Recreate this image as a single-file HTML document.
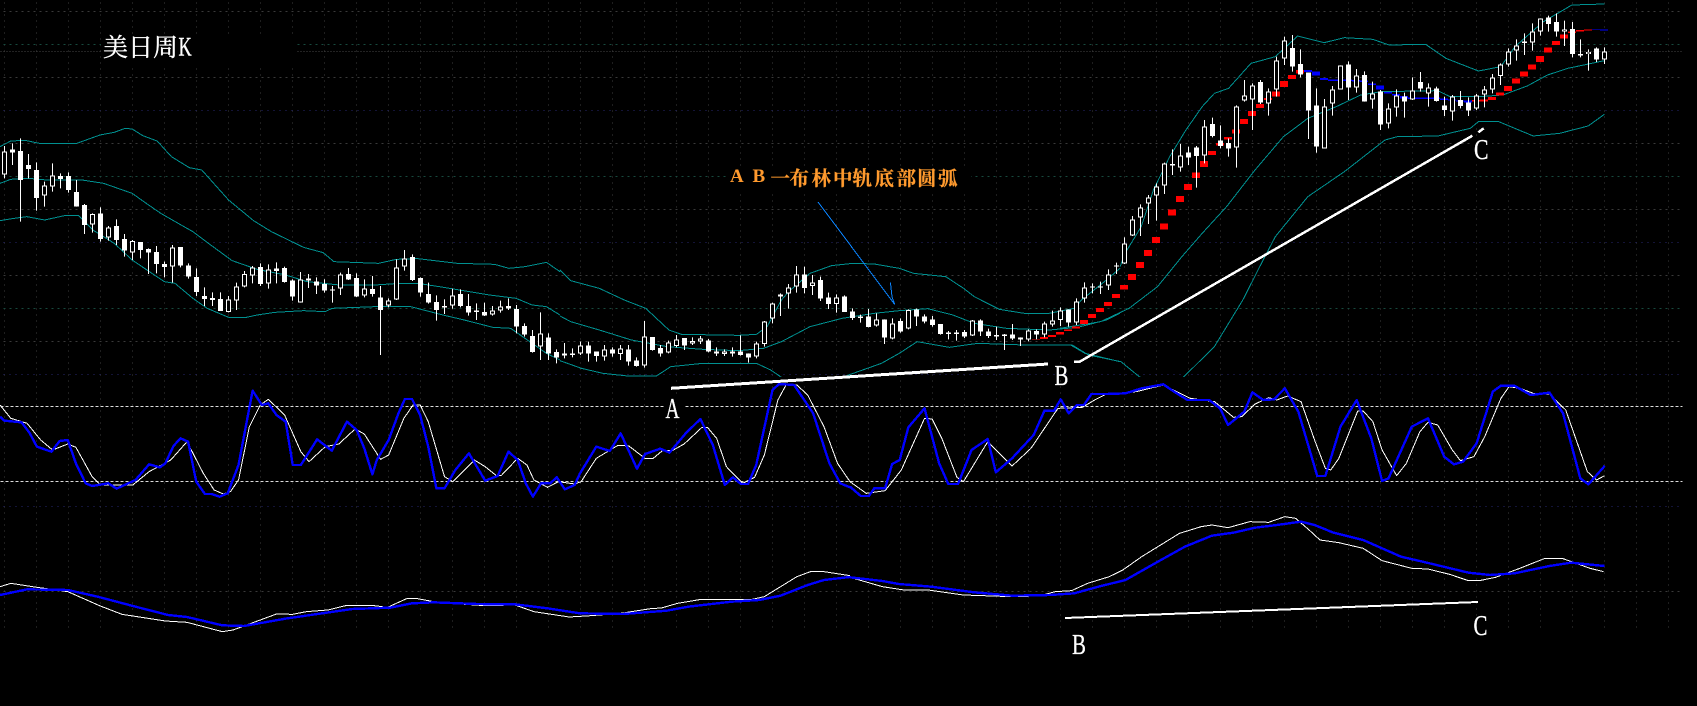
<!DOCTYPE html>
<html lang="zh">
<head>
<meta charset="utf-8">
<title>美日周K</title>
<style>
html,body{margin:0;padding:0;background:#000;width:1697px;height:706px;overflow:hidden}
svg{display:block}
polyline{fill:none;vector-effect:non-scaling-stroke;stroke-linejoin:round}
.band polyline{stroke:#009090;stroke-width:1}
.w polyline{stroke:#fff;stroke-width:1}
.b polyline{stroke:#0000ff;stroke-width:2.4}
.t{font-family:"Liberation Serif","Noto Serif CJK SC",serif}
</style>
</head>
<body>
<svg width="1697" height="706" viewBox="0 0 1697 706" xmlns="http://www.w3.org/2000/svg" shape-rendering="crispEdges">
<defs><clipPath id="c1"><rect x="0" y="0" width="1697" height="377"/></clipPath></defs>
<rect width="1697" height="706" fill="#000"/>

<!-- grid -->
<g transform="translate(.5 .5)" fill="none" stroke-width="1">
<path stroke="#3c3c3c" stroke-dasharray="1 5" d="M4 2V632M36 2V632M68 2V632M100 2V632M132 2V632M164 2V632M196 2V632M228 2V632M260 2V632M292 2V632M324 2V632M356 2V632M388 2V632M420 2V632M452 2V632M484 2V632M516 2V632M548 2V632M580 2V632M612 2V632M644 2V632M676 2V632M708 2V632M740 2V632M772 2V632M804 2V632M836 2V632M868 2V632M900 2V632M932 2V632M964 2V632M996 2V632M1028 2V632M1060 2V632M1092 2V632M1124 2V632M1156 2V632M1188 2V632M1220 2V632M1252 2V632M1284 2V632M1316 2V632M1348 2V632M1380 2V632M1412 2V632M1444 2V632M1476 2V632M1508 2V632M1540 2V632M1572 2V632M1604 2V632M1636 2V632M1668 2V632"/>
<path stroke="#3a3a3a" stroke-dasharray="2 4" d="M3 11H1682M3 77H1682M3 143H1682M3 209H1682M3 275H1682M3 341H1682M3 591H1682"/>
<path stroke="#454545" stroke-dasharray="1 2" d="M0 51H1682"/>
<path stroke="#174a3e" stroke-dasharray="2 4" d="M3 44H1682M3 176H1682M3 308H1682"/>
<path stroke="#26266e" stroke-dasharray="1 5" d="M3 110H1682M3 242H1682M3 374H1682M3 506H1682"/>
<path stroke="#dcdcdc" stroke-dasharray="3 2" d="M0 406H1682M0 481H1682"/>
</g>
<!-- text masks -->
<rect x="101" y="35" width="196" height="33" fill="#000"/>
<rect x="727" y="167" width="244" height="25" fill="#000"/>
<rect x="664" y="396" width="20" height="24" fill="#000"/>
<rect x="1472" y="139" width="20" height="22" fill="#000"/>

<!-- bollinger -->
<g class="band" clip-path="url(#c1)">
<g transform="scale(.35714 .33333)">
<polyline points="0,440 30,423 70,421 110,430 215,430 280,405 320,397 350,385 370,387 400,407 440,423 480,470 530,503 565,510 640,600 710,662 760,695 850,742 905,758 935,785 1060,790 1110,778 1170,776 1280,790 1385,793 1425,805 1470,800 1530,787 1568,815"/>
<polyline points="0,550 30,538 80,535 130,540 230,540 290,550 370,580 400,603 450,640 540,695 590,735 650,782 720,808 800,825 860,845 950,855 1050,855 1120,850 1170,850 1230,860 1370,885 1445,895 1490,915 1530,920 1568,945"/>
<polyline points="0,662 40,655 75,650 125,660 180,647 220,647 260,690 320,730 370,780 460,845 490,850 540,895 580,925 640,952 690,952 720,945 770,937 850,932 910,935 930,925 1050,920 1150,920 1240,945 1300,960 1380,982 1430,985 1530,1060 1568,1080"/>
</g>
<g transform="translate(560 100) scale(.35714 .33333)">
<polyline points="0,510 30,542 110,565 180,600 240,625 305,690 340,703 500,706 550,703 580,680 620,600 640,575 700,520 760,497 820,490 880,492 950,505 990,520 1080,530 1130,565 1160,590 1230,628 1300,640 1370,640 1440,625 1460,600 1530,540 1568,505"/>
<polyline points="0,648 30,665 110,690 200,720 300,740 400,748 500,752 570,745 620,725 700,680 790,655 880,640 950,632 1030,626 1100,645 1160,670 1250,685 1370,690 1450,682 1530,660 1568,640"/>
<polyline points="0,782 60,805 120,820 190,828 270,828 310,800 400,790 550,790 590,810 620,832 700,880 770,880 800,828 900,790 950,760 1000,725 1090,742 1170,730 1300,735 1430,735 1470,760 1568,785"/>
</g>
<g transform="translate(1060 0) scale(.40625 .33333)">
<polyline points="148,800 160,760 200,680 230,570 270,470 310,390 350,320 380,280 415,265 470,190 530,170 585,108 650,128 700,113 770,118 810,135 900,133 950,175 1030,213 1085,200 1120,140 1190,65 1260,15 1340,12"/>
<polyline points="0,985 100,965 170,925 240,860 300,770 350,700 410,620 480,510 550,410 610,355 680,320 740,285 790,275 930,272 960,290 1030,290 1090,285 1150,258 1200,225 1250,205 1340,182"/>
<polyline points="0,1035 30,1035 70,1065 150,1085 195,1130 250,1170 305,1130 380,1040 450,900 500,780 530,710 610,590 700,515 800,420 830,410 930,408 1010,385 1030,365 1080,365 1165,408 1230,400 1300,378 1340,343"/>
</g>
</g>

<!-- SAR -->
<g transform="scale(1 .33333)" fill="none" stroke-width="8">
<path stroke="#f00" d="M1036 1017V1019M1044 1011V1017M1052 1005V1011M1060 996V1004M1068 989V993M1076 979V985M1084 960V972M1092 942V954M1100 924V936M1108 906V918M1116 882V894M1124 855V869M1132 822V840M1140 786V804M1148 750V768M1156 711V729M1164 671V689M1172 628V646M1180 588V606M1188 552V570M1196 518V534M1204 483V501M1212 453V465M1220 429V437M1228 411V419M1236 389V401M1244 357V372M1252 333V348M1260 312V324M1268 294V300M1276 275V289M1284 243V261M1292 225V237M1300 210V220M1476 300V304M1484 299V305M1492 291V300M1500 277V286M1508 258V273M1516 236V251M1524 215V230M1532 194V209M1540 168V186M1548 143V158M1556 123V135M1564 104V116M1572 95V99M1580 90V94M1588 88V92"/>
<path stroke="#00f" d="M1308 210V216M1316 215V227M1324 234V240M1332 239V243M1340 239V243M1348 239V243M1356 240V244M1364 242V246M1372 250V255M1380 257V269M1388 276V280M1396 282V287M1404 288V296M1412 293V297M1420 293V297M1428 293V297M1436 293V297M1444 296V300M1452 298V302M1460 302V304M1468 302V308M1596 88V90M1604 89V91"/>
</g>

<!-- candles -->
<g transform="translate(.5 0) scale(1 .33333)" fill="none">
<path stroke="#fff" stroke-width="1" d="M4 438V535M12 430V495M20 415V665M28 462V535M36 487V632M44 545V620M52 490V575M60 520V565M68 517V578M76 540V620M84 612V702M92 640V698M100 622V725M108 678V722M116 658V735M124 702V770M132 720V780M140 726V775M148 745V822M156 738V820M164 785V832M172 735V848M180 741V802M188 790V836M196 805V888M204 862V918M212 877V918M220 877V933M228 888V937M236 848V930M244 813V862M252 798V850M260 790V858M268 793V866M276 787V850M284 800V848M292 838V902M300 816V908M308 822V864M316 832V882M324 838V878M332 858V908M340 818V885M348 804V840M356 820V891M364 838V892M372 828V890M380 858V1065M388 895V922M396 778V900M404 750V812M412 763V843M420 832V890M428 848V911M436 886V962M444 898V942M452 866V926M460 868V922M468 882V947M476 910V960M484 908V948M492 918V947M500 902V938M508 895V930M516 915V1000M524 970V1010M532 990V1058M540 937V1080M548 1000V1080M556 1048V1090"/>
<path stroke="#fff" stroke-width="5" d="M4 455V523M12 448V458M20 453V540M28 495V507M36 510V594M44 556V587M52 526V559M60 528V537M68 528V570M76 576V620M84 615V675M92 642V674M100 640V717M108 682V712M116 678V720M124 717V752M132 723V757M140 726V750M148 747V758M156 756V792M164 792V801M172 742V800M180 741V797M188 796V830M196 831V876M204 888V897M212 894V900M220 897V933M228 898V936M236 859V902M244 822V860M252 802V826M260 801V852M268 808V850M276 805V813M284 804V846M292 842V890M300 838V908M308 835V842M316 844V857M324 852V872M332 868V872M340 824V865M348 822V839M356 834V890M364 865V887M372 867V882M380 892V930M388 901V917M396 802V898M404 775V800M412 771V840M420 834V878M428 882V908M436 906V930M444 918V923M452 886V916M460 882V918M468 918V938M476 932V936M484 936V947M492 931V944M500 919V932M508 918V926M516 927V980M524 978V1004M532 1008V1056M540 1000V1040M548 1012V1060M556 1056V1073"/>
<path stroke="#000" stroke-width="3" d="M4 458V520M44 559V584M52 529V556M92 645V671M108 685V709M132 726V754M172 745V797M228 901V933M236 862V899M244 825V857M252 805V823M268 811V847M300 841V905M340 827V862M364 868V884M388 904V914M396 805V895M404 778V797M452 889V913M492 934V941M500 922V929M540 1003V1037"/>
</g>
<g transform="translate(.5 100) scale(1 .33333)" fill="none">
<path stroke="#fff" stroke-width="1" d="M564 729V775M572 745V772M580 725V765M588 725V785M596 755V785M604 735V782M612 742V770M620 735V780M628 735V797M636 772V800M644 663V803M652 711V752M660 735V770M668 722V760M676 705V742M684 714V750M692 712V735M700 708V732M708 717V757M716 742V768M724 748V768M732 742V770M740 706V767M748 760V788M756 725V775M764 663V740M772 608V670M780 580V648M788 552V626M796 498V578M804 500V580M812 525V585M820 530V603M828 578V627M836 583V638M844 586V636M852 625V660M860 644V668M868 627V682M876 640V680M884 658V732M892 655V718M900 655V698M908 628V688M916 626V678M924 643V670M932 648V680M940 672V704M948 693V718M956 690V722M964 690V714M972 660V708M980 658V708M988 686V714M996 680V720M1004 702V750M1012 672V720M1020 712V738M1028 688V724M1036 688V718M1044 665V712M1052 632V680"/>
<path stroke="#fff" stroke-width="5" d="M564 760V767M572 760V765M580 736V760M588 736V760M596 755V768M604 748V770M612 748V760M620 745V762M628 748V785M636 781V798M644 709V797M652 711V750M660 744V760M668 727V758M676 718V738M684 714V737M692 723V730M700 715V725M708 721V755M716 754V760M724 755V762M732 755V760M740 754V765M748 760V772M756 730V770M764 664V732M772 610V655M780 583V590M788 562V580M796 523V560M804 523V564M812 548V558M820 540V595M828 592V612M836 593V612M844 589V636M852 634V654M860 650V654M868 650V681M876 659V677M884 658V713M892 671V716M900 663V695M908 630V686M916 628V650M924 649V664M932 658V675M940 672V702M948 698V702M956 698V702M964 696V710M972 662V706M980 661V695M988 694V708M996 705V710M1004 704V708M1012 703V715M1020 712V718M1028 692V718M1036 693V704M1044 670V704M1052 662V673"/>
<path stroke="#000" stroke-width="3" d="M580 739V757M604 751V767M620 748V759M644 712V794M668 730V755M676 721V735M692 726V727M700 718V722M724 758V759M756 733V767M764 667V729M772 613V652M780 586V587M788 565V577M796 526V557M812 551V555M836 596V609M876 662V674M892 674V713M908 633V683M972 665V703M1028 695V715M1044 673V701M1052 665V670"/>
</g>
<g transform="translate(.5 0) scale(1 .33333)" fill="none">
<path stroke="#fff" stroke-width="1" d="M1060 922V978M1068 928V980M1076 895V975M1084 847V908M1092 850V880M1100 845V882M1108 808V870M1116 788V822M1124 712V792M1132 648V708M1140 613V708M1148 585V672M1156 550V662M1164 488V582M1172 448V525M1180 432V515M1188 440V495M1196 438V563M1204 360V490M1212 353V412M1220 376V445M1228 415V470M1236 316V503M1244 240V305M1252 250V390M1260 240V312M1268 265V347M1276 170V290M1284 110V195M1292 105V215M1300 148V232M1308 218V417M1316 265V458M1324 297V445M1332 258V347M1340 196V268M1348 184V300M1356 207V278M1364 214V305M1372 245V326M1380 270V390M1388 310V385M1396 268V350M1404 278V353M1412 232V300M1420 216V275M1428 250V320M1436 260V305M1444 290V348M1452 285V362M1460 273V325M1468 292V348M1476 282V330M1484 258V322M1492 222V280M1500 190V255M1508 145V200M1516 118V182M1524 100V165M1532 70V152M1540 55V107M1548 47V95M1556 40V110M1564 62V138M1572 66V172M1580 118V172M1588 148V212M1596 142V186M1604 142V192"/>
<path stroke="#fff" stroke-width="5" d="M1060 931V960M1068 928V968M1076 905V968M1084 862V896M1092 860V863M1100 860V863M1108 824V857M1116 796V800M1124 730V790M1132 658V706M1140 622V653M1148 592V610M1156 559V587M1164 490V556M1172 492V496M1180 466V502M1188 458V472M1196 442V468M1204 380V466M1212 372V408M1220 421V438M1228 429V445M1236 319V442M1244 287V301M1252 256V298M1260 246V308M1268 275V310M1276 181V268M1284 121V175M1292 144V200M1300 192V224M1308 218V332M1316 316V440M1324 320V445M1332 268V310M1340 196V268M1348 193V263M1356 226V262M1364 225V305M1372 280V298M1380 274V374M1388 325V370M1396 286V322M1404 289V305M1412 272V298M1420 246V266M1428 262V280M1436 265V303M1444 316V330M1452 290V334M1460 300V318M1468 308V332M1476 286V326M1484 268V284M1492 232V268M1500 194V228M1508 154V194M1516 136V152M1524 124V129M1532 94V128M1540 55V94M1548 52V72M1556 66V95M1564 88V94M1572 87V162M1580 162V167M1588 156V162M1596 145V178M1604 154V178"/>
<path stroke="#000" stroke-width="3" d="M1060 934V957M1076 908V965M1084 865V893M1108 827V854M1124 733V787M1132 661V703M1140 625V650M1148 595V607M1156 562V584M1164 493V553M1180 469V499M1204 383V463M1236 322V439M1244 290V298M1252 259V295M1268 278V307M1276 184V265M1284 124V172M1324 323V442M1332 271V307M1340 199V265M1356 229V259M1372 283V295M1388 328V367M1396 289V319M1412 275V295M1428 265V277M1452 293V331M1476 289V323M1484 271V281M1492 235V265M1500 197V225M1508 157V191M1516 139V149M1532 97V125M1540 58V91M1564 90V92M1588 158V160M1604 157V175"/>
</g>

<!-- annotation lines -->
<g fill="none">
<path stroke="#0a84ff" stroke-width="1" d="M818 202L894.6 304.3L892 296.7L890.4 282.3"/>
<path stroke="#fff" stroke-width="3" d="M671 388.3L1048 364"/>
<path stroke="#fff" stroke-width="2.5" d="M1074 361.5H1080L1472.4 135.7M1478.4 132.3L1483.7 128.3"/>
<path stroke="#fff" stroke-width="2" d="M1065 618L1477.8 602"/>
</g>

<!-- stochastic & macd (white) -->
<g class="w">
<g transform="translate(0 370) scale(.54209 .33333)">
<polyline points="0,105 20,145 50,160 75,210 97,240 125,222 140,232 170,320 185,345 245,345 275,305 315,270 345,215 375,310 395,360 412,372 425,365 440,330 460,170 480,105 495,88 525,135 555,245 570,275 600,230 625,222 655,177 672,192 695,250 702,268 717,255 745,145 762,105 775,105 790,155 820,320 835,335 875,270 895,290 915,316 925,316 955,265 972,285 985,330 1010,352 1030,335 1060,342 1072,335 1100,265 1140,226 1160,228 1190,265 1205,265 1222,242 1240,242 1262,222 1295,172 1305,172 1322,205 1340,290 1370,340 1392,322 1410,255 1435,90 1450,45 1470,45 1490,75 1520,170 1545,280 1568,335"/>
<polyline points="0,650 20,640 60,650 125,665 160,690 185,708 225,733 305,753 345,757 410,785 430,780 455,765 510,732 540,733 565,725 605,720 640,706 690,707 715,712 750,686 770,686 800,695 830,700 895,707 950,705 985,725 1050,741 1090,737 1145,730 1200,716 1220,714 1250,700 1290,689 1385,689 1410,680 1470,620 1495,605 1520,605 1568,617"/>
</g>
<g transform="translate(850 370) scale(.54018 .33333)">
<polyline points="0,335 30,370 65,362 95,300 138,145 152,147 170,205 198,322 210,335 255,215 300,288 335,235 385,115 430,112 455,88 475,72 530,65 580,45 630,85 675,95 710,142 725,140 750,102 775,83 790,90 810,78 835,95 860,210 880,295 890,300 905,265 940,123 950,123 968,155 985,240 1012,317 1030,280 1055,185 1070,157 1088,165 1115,240 1130,272 1155,260 1175,200 1205,85 1220,50 1240,55 1265,70 1295,72 1325,120 1365,305 1382,330 1397,317"/>
<polyline points="0,622 60,650 100,660 145,660 210,675 300,680 350,678 380,665 410,662 440,640 480,620 505,600 540,560 570,530 610,490 650,470 670,465 700,473 740,455 775,457 805,440 825,445 850,480 870,510 905,518 950,535 985,572 1040,595 1070,597 1110,613 1145,632 1165,632 1195,622 1240,595 1285,566 1320,566 1370,595 1395,605"/>
</g>
</g>
<!-- stochastic & macd (blue) -->
<g class="b">
<g transform="translate(0 370) scale(.54209 .33333)">
<polyline points="0,140 8,152 40,157 55,190 68,230 95,245 110,213 125,210 140,280 158,340 170,348 200,340 215,356 250,330 275,283 295,292 305,280 320,228 333,205 347,215 362,335 378,372 390,372 405,380 420,370 440,285 466,62 483,105 495,100 510,135 527,155 540,285 555,285 585,208 612,242 640,155 658,180 672,235 687,313 695,270 717,210 735,130 747,87 760,87 775,135 790,230 805,355 820,355 840,300 865,250 895,332 918,318 938,245 955,270 970,340 983,380 998,340 1015,340 1027,322 1042,358 1060,345 1070,310 1100,230 1125,243 1145,190 1175,296 1190,252 1218,236 1235,248 1265,190 1292,147 1315,225 1337,345 1352,322 1367,342 1380,342 1395,285 1425,60 1437,42 1465,45 1500,130 1530,280 1550,340 1568,352"/>
<polyline points="0,675 50,658 125,660 180,680 250,710 310,735 345,741 410,766 450,768 530,745 650,717 720,713 760,700 800,697 880,702 950,703 1010,715 1070,730 1150,732 1230,722 1270,710 1350,695 1400,690 1440,677 1490,645 1520,630 1568,621"/>
</g>
<g transform="translate(850 370) scale(.54018 .33333)">
<polyline points="0,350 20,378 35,378 45,355 65,355 78,282 92,270 108,172 138,115 165,280 182,342 200,342 225,240 255,207 270,307 300,265 340,195 360,122 378,122 390,88 405,130 420,105 433,105 447,72 475,72 510,70 540,55 580,43 600,65 625,90 665,90 685,115 700,165 730,125 745,67 765,90 785,88 805,55 830,125 865,318 880,318 908,170 938,90 965,205 985,333 997,325 1040,170 1070,145 1100,260 1118,283 1135,275 1160,220 1190,65 1205,47 1230,47 1260,75 1295,68 1320,130 1352,325 1367,343 1397,288"/>
<polyline points="0,622 60,633 90,642 150,650 230,667 300,677 370,675 415,670 460,650 510,630 570,575 620,530 670,497 710,488 750,473 790,465 835,455 860,465 895,488 950,510 1020,560 1060,575 1145,608 1185,615 1230,610 1295,588 1335,578 1397,588"/>
</g>
</g>

<!-- text -->
<g shape-rendering="auto">
<text x="103 128 153" y="56" font-size="25" fill="#fff" stroke="#fff" stroke-width=".35" style="font-family:'Noto Serif CJK SC','Liberation Serif',serif">美日周</text>
<text class="t" transform="translate(178.5 55.5) scale(.7 1)" font-size="26" fill="#fff" stroke="#fff" stroke-width=".4">K</text>
<text class="t" x="730" y="182" font-size="19" font-weight="700" fill="#ff9a2e">A</text>
<text class="t" x="752.5" y="182" font-size="19" font-weight="700" fill="#ff9a2e">B</text>
<text x="770.5 789.5 811.5 833 852.5 874.5 896.5 917 938" y="185" font-size="19.5" font-weight="700" fill="#ff9a2e" stroke="#ff9a2e" stroke-width=".25" style="font-family:'Noto Serif CJK SC','Liberation Serif',serif">一布林中轨底部圆弧</text>
<text class="t" transform="translate(665.5 418) scale(.67 1)" font-size="29" fill="#fff" stroke="#fff" stroke-width=".3">A</text>
<text class="t" transform="translate(1054.5 385) scale(.72 1)" font-size="29" fill="#fff" stroke="#fff" stroke-width=".3">B</text>
<text class="t" transform="translate(1474 159) scale(.75 1)" font-size="29" fill="#fff" stroke="#fff" stroke-width=".3">C</text>
<text class="t" transform="translate(1072 654) scale(.72 1)" font-size="29" fill="#fff" stroke="#fff" stroke-width=".3">B</text>
<text class="t" transform="translate(1473.5 635) scale(.72 1)" font-size="29" fill="#fff" stroke="#fff" stroke-width=".3">C</text>
</g>
</svg>
</body>
</html>
